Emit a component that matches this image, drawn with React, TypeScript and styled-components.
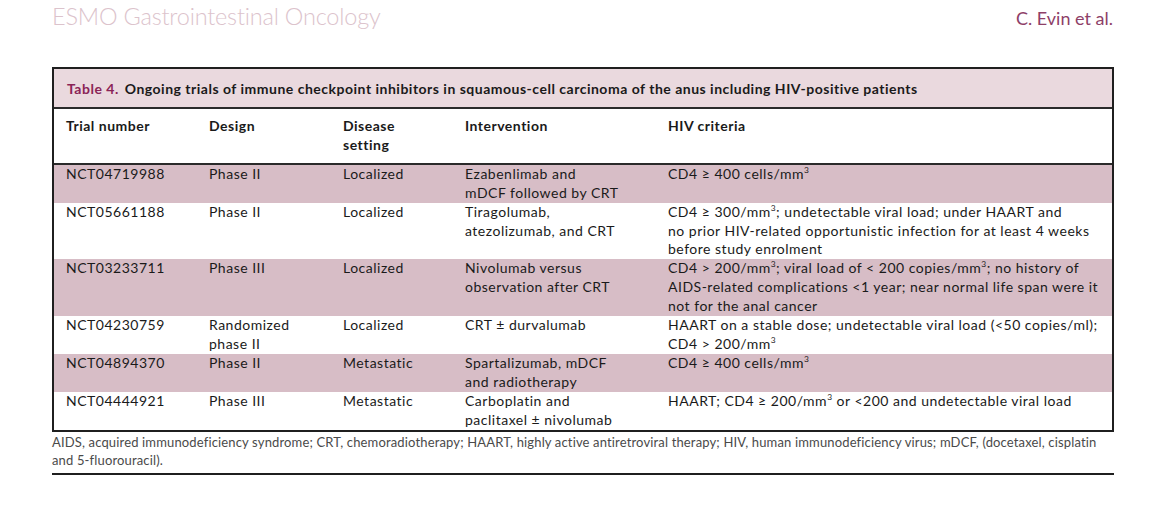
import React from 'react';
import styled, { createGlobalStyle } from 'styled-components';

const GlobalStyle = createGlobalStyle`
  html, body {
    margin: 0;
    padding: 0;
    background: #fff;
  }
  body {
    font-family: Lato, "Open Sans", "Liberation Sans", sans-serif;
    color: #1a1a1a;
  }
`;

const Page = styled.div`
  width: 1062px;
  padding: 2px 0 0 52px;
`;

const RunningHead = styled.header`
  display: flex;
  justify-content: space-between;
  align-items: baseline;
  height: 65px;
`;

const Journal = styled.div`
  font-size: 23.5px;
  font-weight: 300;
  color: #dcc3cc;
  letter-spacing: -0.2px;
`;

const Authors = styled.div`
  font-size: 18px;
  color: #8e3f68;
  padding-right: 1px;
`;

const Frame = styled.div`
  border: 2px solid #1f1f1f;
`;

const CaptionBar = styled.div`
  background: #ead9de;
  border-bottom: 2px solid #2a2a2a;
  height: 38px;
  display: flex;
  align-items: center;
  padding-left: 13px;
  font-size: 14px;
  letter-spacing: 0.5px;
  font-weight: 700;
`;

const Label = styled.span`
  color: #8a2457;
  margin-right: 6px;
`;

const Row = styled.div<{ $shaded?: boolean; $head?: boolean }>`
  display: grid;
  grid-template-columns: 143px 134px 122px 203px 1fr;
  background: ${(p) => (p.$shaded ? '#d7bdc6' : '#fff')};
  padding: ${(p) => (p.$head ? '8px 0 8px' : '0')};
  border-bottom: ${(p) => (p.$head ? '2px solid #2a2a2a' : 'none')};
  font-size: 14px;
  letter-spacing: 0.5px;
  line-height: 18.9px;
  font-weight: ${(p) => (p.$head ? 700 : 400)};
`;

const Cell = styled.div`
  padding-left: 12px;
  white-space: nowrap;
`;

const Line = styled.span`
  display: block;
`;

const Sup = styled.sup`
  font-size: 0.6em;
  line-height: 0;
  vertical-align: 0.75em;
`;

const Footnote = styled.p`
  margin: 1px 0 0;
  font-size: 13px;
  letter-spacing: 0.15px;
  line-height: 18.5px;
  color: #4a4a4a;
  padding-bottom: 3px;
  border-bottom: 2px solid #1f1f1f;
`;

const mm3 = (
  <>
    /mm<Sup>3</Sup>
  </>
);

type Trial = {
  id: string;
  design: string[];
  setting: string;
  intervention: string[];
  hiv: React.ReactNode[];
};

const trials: Trial[] = [
  {
    id: 'NCT04719988',
    design: ['Phase II'],
    setting: 'Localized',
    intervention: ['Ezabenlimab and', 'mDCF followed by CRT'],
    hiv: [<>CD4 ≥ 400 cells{mm3}</>],
  },
  {
    id: 'NCT05661188',
    design: ['Phase II'],
    setting: 'Localized',
    intervention: ['Tiragolumab,', 'atezolizumab, and CRT'],
    hiv: [
      <>CD4 ≥ 300{mm3}; undetectable viral load; under HAART and</>,
      'no prior HIV-related opportunistic infection for at least 4 weeks',
      'before study enrolment',
    ],
  },
  {
    id: 'NCT03233711',
    design: ['Phase III'],
    setting: 'Localized',
    intervention: ['Nivolumab versus', 'observation after CRT'],
    hiv: [
      <>CD4 &gt; 200{mm3}; viral load of &lt; 200 copies{mm3}; no history of</>,
      'AIDS-related complications <1 year; near normal life span were it',
      'not for the anal cancer',
    ],
  },
  {
    id: 'NCT04230759',
    design: ['Randomized', 'phase II'],
    setting: 'Localized',
    intervention: ['CRT ± durvalumab'],
    hiv: [
      'HAART on a stable dose; undetectable viral load (<50 copies/ml);',
      <>CD4 &gt; 200{mm3}</>,
    ],
  },
  {
    id: 'NCT04894370',
    design: ['Phase II'],
    setting: 'Metastatic',
    intervention: ['Spartalizumab, mDCF', 'and radiotherapy'],
    hiv: [<>CD4 ≥ 400 cells{mm3}</>],
  },
  {
    id: 'NCT04444921',
    design: ['Phase III'],
    setting: 'Metastatic',
    intervention: ['Carboplatin and', 'paclitaxel ± nivolumab'],
    hiv: [<>HAART; CD4 ≥ 200{mm3} or &lt;200 and undetectable viral load</>],
  },
];

const lines = (items: React.ReactNode[]) =>
  items.map((item, i) => <Line key={i}>{item}</Line>);

export default function App() {
  return (
    <Page>
      <GlobalStyle />
      <RunningHead>
        <Journal>ESMO Gastrointestinal Oncology</Journal>
        <Authors>C. Evin et al.</Authors>
      </RunningHead>
      <Frame>
        <CaptionBar>
          <Label>Table 4.</Label>
          Ongoing trials of immune checkpoint inhibitors in squamous-cell carcinoma of the anus including
          HIV-positive patients
        </CaptionBar>
        <Row $head>
          <Cell>Trial number</Cell>
          <Cell>Design</Cell>
          <Cell>{lines(['Disease', 'setting'])}</Cell>
          <Cell>Intervention</Cell>
          <Cell>HIV criteria</Cell>
        </Row>
        {trials.map((t, i) => (
          <Row key={t.id} $shaded={i % 2 === 0}>
            <Cell>{t.id}</Cell>
            <Cell>{lines(t.design)}</Cell>
            <Cell>{t.setting}</Cell>
            <Cell>{lines(t.intervention)}</Cell>
            <Cell>{lines(t.hiv)}</Cell>
          </Row>
        ))}
      </Frame>
      <Footnote>
        AIDS, acquired immunodeficiency syndrome; CRT, chemoradiotherapy; HAART, highly active antiretroviral
        therapy; HIV, human immunodeficiency virus; mDCF, (docetaxel, cisplatin
        <br />
        and 5-fluorouracil).
      </Footnote>
    </Page>
  );
}
